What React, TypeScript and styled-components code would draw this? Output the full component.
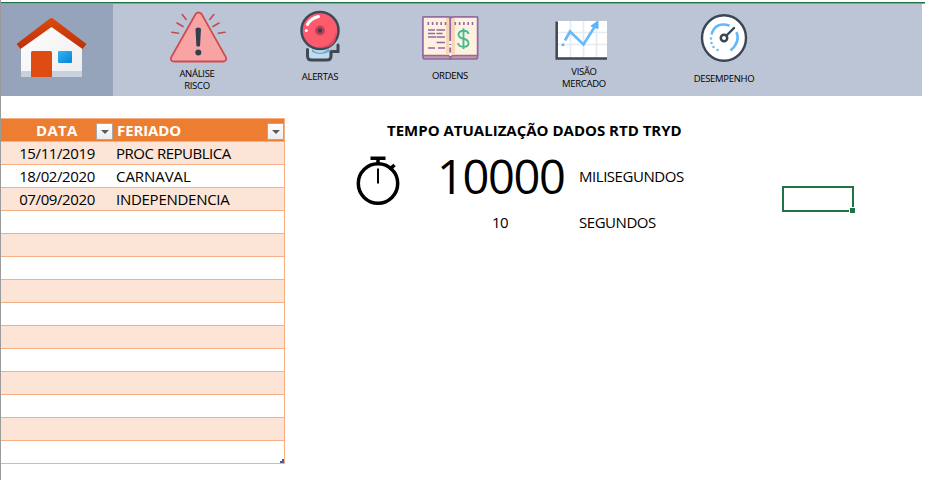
import React from "react";
import styled, { createGlobalStyle } from "styled-components";

const GlobalStyle = createGlobalStyle`
  *, *::before, *::after { box-sizing: border-box; }
  body { margin: 0; background: #fff; overflow: hidden; }
`;

const Sheet = styled.div`
  width: 925px;
  height: 480px;
  padding-top: 2px;
  border-left: 1px solid #9b9b9b;
  background: #fff;
  color: #000;
  font-family: "Open Sans", "Noto Sans", sans-serif;
  overflow: hidden;
`;

const TopRule = styled.div`
  height: 2px;
  background: #217346;
  border-bottom: 1px solid #82a591;
  margin-left: -1px;
`;

const Nav = styled.nav`
  display: flex;
  width: 921px;
  height: 92px;
  background: #bcc5d5;
`;

const HomeTab = styled.div`
  width: 112px;
  height: 92px;
  padding: 13px 0 0 14px;
  background: #95a4bb;
`;

const NavItem = styled.div<{ $width: number; $top: number }>`
  display: flex;
  flex-direction: column;
  align-items: center;
  width: ${(p) => p.$width}px;
  padding-top: ${(p) => p.$top}px;
  svg { flex: none; display: block; }
`;

const NavLabel = styled.span<{ $gap: number }>`
  margin-top: ${(p) => p.$gap}px;
  font-size: 9.5px;
  line-height: 12px;
  letter-spacing: -0.3px;
  text-align: center;
  white-space: pre;
`;

const Body = styled.main`
  display: flex;
  padding-top: 22px;
`;

const Table = styled.div`
  position: relative;
  width: 284px;
  border: 1px solid #f4b084;
  border-left: 0;
  border-bottom: 0;
`;

const HeaderRow = styled.div`
  display: grid;
  grid-template-columns: 112px 1fr;
  height: 23px;
  background: #ed7d31;
  border-bottom: 1px solid #f4b084;
  color: #fff;
  font-size: 15px;
  font-weight: 700;
  line-height: 23px;
`;

const HeaderCell = styled.div<{ $center?: boolean }>`
  display: flex;
  justify-content: space-between;
  padding-left: ${(p) => (p.$center ? 35 : 4)}px;
`;

const HeaderText = styled.span<{ $spacing: number }>`
  letter-spacing: ${(p) => p.$spacing}px;
`;

const FilterButton = styled.span`
  display: flex;
  align-items: center;
  justify-content: center;
  width: 17px;
  height: 17px;
  margin-top: 4px;
  border: 1px solid #a6a9ae;
  background: linear-gradient(#fff, #e9ecf1);
  &::after {
    content: "";
    border: 4px solid transparent;
    border-top-color: #5b5b5b;
    border-bottom: 0;
  }
`;

const Row = styled.div`
  display: grid;
  grid-template-columns: 112px 1fr;
  height: 23px;
  border-bottom: 1px solid #f4b084;
  font-size: 15px;
  line-height: 22px;
  &:nth-child(even) { background: #fce4d6; }
`;

const Cell = styled.span<{ $center?: boolean; $spacing: number }>`
  padding-left: ${(p) => (p.$center ? 0 : 3)}px;
  text-align: ${(p) => (p.$center ? "center" : "left")};
  letter-spacing: ${(p) => p.$spacing}px;
  white-space: nowrap;
`;

const ResizeCorner = styled.svg`
  position: absolute;
  right: 0;
  bottom: 1px;
`;

const Timer = styled.section`
  width: 334px;
  margin-left: 70px;
`;

const TimerTitle = styled.h1`
  margin: 1px 0 0 32px;
  font-size: 15px;
  font-weight: 700;
  line-height: 23px;
  letter-spacing: 0;
  white-space: nowrap;
`;

const TimerGrid = styled.div`
  display: grid;
  grid-template-columns: 46px 199px 1fr;
  grid-template-rows: 69px 23px;
`;

const ClockCell = styled.div`
  padding-top: 13px;
`;

const BigValue = styled.div`
  padding: 2px 0 0 36px;
  font-size: 47px;
  line-height: 64px;
  letter-spacing: -1.4px;
  white-space: nowrap;
`;

const SmallValue = styled.div`
  grid-column: 2;
  padding-left: 91px;
  font-size: 15px;
  line-height: 23px;
  letter-spacing: -0.5px;
`;

const Unit = styled.div<{ $top?: number }>`
  margin-left: -21px;
  padding-top: ${(p) => p.$top ?? 0}px;
  font-size: 15px;
  line-height: 23px;
  letter-spacing: -0.46px;
`;

const ActiveCell = styled.div`
  position: relative;
  width: 72px;
  height: 26px;
  margin: 68px 0 0 93px;
  border: 2px solid #217346;
  &::after {
    content: "";
    position: absolute;
    right: -3px;
    bottom: -3px;
    width: 6px;
    height: 6px;
    border: 1px solid #fff;
    border-width: 1px 0 0 1px;
    background: #217346;
  }
`;

const HomeIcon = () => (
  <svg width="74" height="64" viewBox="15 17 74 64">
    <defs>
      <linearGradient id="roof" x1="0" y1="0" x2="0" y2="1">
        <stop offset="0" stopColor="#dc480c" />
        <stop offset="1" stopColor="#bd310b" />
      </linearGradient>
      <linearGradient id="wall" x1="0" y1="0" x2="1" y2="1">
        <stop offset="0" stopColor="#fff" />
        <stop offset="1" stopColor="#ededee" />
      </linearGradient>
      <linearGradient id="pane" x1="0" y1="0" x2="1" y2="1">
        <stop offset="0" stopColor="#32b5ef" />
        <stop offset="1" stopColor="#0881da" />
      </linearGradient>
    </defs>
    <path d="M21 44 51.5 22 82 44V75q0 2-2 2H23q-2 0-2-2Z" fill="url(#wall)" />
    <path d="M21 71H82v4q0 2-2 2H23q-2 0-2-2Z" fill="#c8d2dd" />
    <path d="M50 18.6q1.500-1 3 0L86.500 44 82.500 49 51.500 27 20.500 49 16.500 44Z" fill="url(#roof)" />
    <path d="M31 77V52.500q0-1.500 1.500-1.500h18q1.500 0 1.500 1.500V77Z" fill="#df4b10" />
    <rect x="58" y="51" width="14" height="12" rx="1" fill="url(#pane)" />
  </svg>
);

const RiskIcon = () => (
  <svg width="60" height="54" viewBox="167 10 60 54" fill="none" strokeLinecap="round">
    <path d="M195.600 14q3-3 6 0L225.800 57q1.500 4.500-3 4.500H174.300q-4.500 0-3-4.500Z" fill="#f8a4a5" stroke="#cf4b50" strokeWidth="1.800" />
    <path d="m182.200 14.500 4 5M177 23l6 3.500M171.800 32.300l6.700.9M213.800 14.500l-4 5M219 23l-6 3.500M225 32.300l-6.700.9" stroke="#c8494f" strokeWidth="1.600" />
    <path d="M195.500 29q0-1.500 2.700-1.500T201 29l-1 17q-1.800 1.200-3.600 0Z" fill="#333f4d" />
    <circle cx="198.300" cy="52.500" r="3" fill="#333f4d" />
  </svg>
);

const AlertIcon = () => (
  <svg width="42" height="54" viewBox="299 9 42 54">
    <path d="M309 45h20v10q0 4-4 4h-12q-4 0-4-4Z" fill="#c4daed" />
    <path d="M312 49q8 8 17-1v4q-9 4-17 0Z" fill="#72a8d2" />
    <path d="M307.500 49.500V56q0 4 4 4H327q4 0 4-4V51.500M332.500 51.500h5.500V45" fill="none" stroke="#3e4955" strokeWidth="3" strokeLinecap="round" />
    <circle cx="320" cy="30.500" r="18.500" fill="#fd5b6d" stroke="#3e4955" strokeWidth="2.500" />
    <path d="M320 47q12-1 16-14 1.500 15-16 15Z" fill="#d94b5e" />
    <circle cx="320" cy="30.500" r="5" fill="#bd4055" />
    <circle cx="320" cy="30.500" r="2.300" fill="#423c4a" />
    <path d="M307.500 24.500q3-6 11-8" fill="none" stroke="#fff" strokeWidth="3" strokeLinecap="round" />
    <circle cx="306.300" cy="30.500" r="1.500" fill="#fff" />
  </svg>
);

const OrdersIcon = () => (
  <svg width="58" height="46" viewBox="421 15 58 46" fill="none">
    <rect x="423" y="17" width="54.500" height="42" rx="2" fill="#c798a2" stroke="#906aa2" strokeWidth="1.700" />
    <path d="M423 17h25.500l2 1.500 2-1.500h25v38.500h-25l-2 2-2-2H423Z" fill="#fff1df" stroke="#906aa2" strokeWidth="1.500" />
    <path d="M446 18h3v37h-3Z" fill="#f6d6b7" />
    <path d="M451.500 18h3.500v37h-3.500Z" fill="#f6d6b7" />
    <path d="M450.200 17v24M450.200 44v1M450.200 47.500v5M450.200 56v4" stroke="#906aa2" strokeWidth="1.900" />
    <path d="M427.500 23.500h21M454.500 23.500h21" stroke="#906aa2" strokeWidth="3" strokeDasharray="1.600 2.700" />
    <path d="M428 30h7M436.500 30h8.500M428 33.500h7M436.500 33.500h6M428 37h8M436.500 37h8.500M436.500 42.500h8.500M428 48h7M438 48h7" stroke="#906aa2" strokeWidth="1.500" />
    <path d="M468.500 34q-.5-3.300-5-3.300t-5 3.700q0 3.300 5 4.300t5 4.800q0 3.300-5 3.300t-5.500-3.800M463.500 28.300V49" stroke="#48b993" strokeWidth="1.900" />
  </svg>
);

const MarketIcon = () => (
  <svg width="58" height="42" viewBox="555 20 58 42" fill="none">
    <path d="M557 21h50v37h-50Z" fill="#fff" />
    <path d="M570.500 21v37M583.500 21v37M596.500 21v37M557 32.500h50M557 44.500h50" stroke="#e5ebf1" strokeWidth="1.700" />
    <path d="M556.700 21.500V58.500H607" stroke="#3e4753" strokeWidth="2.500" />
    <path d="m565 40.500 5-9 13.500 13L594.500 27" stroke="#66b9fa" strokeWidth="2.700" />
    <path d="m591 26 7-5v7.500Z" fill="#59b4fc" stroke="#59b4fc" strokeLinejoin="round" />
    <circle cx="563" cy="44.800" r="1.500" fill="#59b4fc" />
  </svg>
);

const GaugeIcon = () => (
  <svg width="48" height="50" viewBox="700 13 48 50" fill="none">
    <ellipse cx="724" cy="38" rx="22" ry="22.700" fill="#fff" stroke="#3b4653" strokeWidth="2.400" />
    <path d="M711.500 34.500C714 25.500 721 22.500 729.500 25.700M736.500 32Q740.500 42 730.500 50.500" stroke="#66b9fa" strokeWidth="2.600" />
    <path d="M711 38.500v.1M711.500 43v.1M713.500 47v.1M717.500 50v.1" stroke="#66b9fa" strokeWidth="2.500" strokeLinecap="round" />
    <circle cx="724" cy="38" r="3.200" stroke="#3b4653" strokeWidth="2.500" />
    <path d="m726.500 35.500 7.500-7.500" stroke="#3b4653" strokeWidth="2.400" strokeLinecap="round" />
  </svg>
);

const ClockIcon = () => (
  <svg width="46" height="50" viewBox="355 155 46 50" fill="none" stroke="#000">
    <circle cx="378" cy="183.500" r="19.700" strokeWidth="3.500" />
    <path d="M370.500 158.200h15M378 158.500v5" strokeWidth="3.500" />
    <path d="m389.500 169.500 5-4.500" strokeWidth="3.500" />
    <path d="M378 168.500V183.500" strokeWidth="2" />
  </svg>
);

const navItems = [
  { label: "ANÁLISE\nRISCO", width: 168, top: 6, gap: 4, icon: <RiskIcon /> },
  { label: "ALERTAS", width: 78, top: 5, gap: 8, icon: <AlertIcon /> },
  { label: "ORDENS", width: 182, top: 11, gap: 9, icon: <OrdersIcon /> },
  { label: "VISÃO\nMERCADO", width: 86, top: 16, gap: 4, icon: <MarketIcon /> },
  { label: "DESEMPENHO", width: 194, top: 9, gap: 10, icon: <GaugeIcon /> },
];

const holidays = [
  { date: "15/11/2019", name: "PROC REPUBLICA", spacing: -0.48 },
  { date: "18/02/2020", name: "CARNAVAL", spacing: -0.05 },
  { date: "07/09/2020", name: "INDEPENDENCIA", spacing: -0.27 },
];

const rows = Array.from({ length: 14 }, (_, i) => holidays[i]);

export default function App() {
  return (
    <Sheet>
      <GlobalStyle />
      <TopRule />
      <Nav>
        <HomeTab><HomeIcon /></HomeTab>
        {navItems.map((n) => (
          <NavItem key={n.label} $width={n.width} $top={n.top}>
            {n.icon}
            <NavLabel $gap={n.gap}>{n.label}</NavLabel>
          </NavItem>
        ))}
      </Nav>
      <Body>
        <Table>
          <HeaderRow>
            <HeaderCell $center>
              <HeaderText $spacing={0.3}>DATA</HeaderText>
              <FilterButton />
            </HeaderCell>
            <HeaderCell>
              <HeaderText $spacing={-0.1}>FERIADO</HeaderText>
              <FilterButton />
            </HeaderCell>
          </HeaderRow>
          {rows.map((row, i) => (
            <Row key={i}>
              <Cell $center $spacing={-0.4}>{row?.date}</Cell>
              <Cell $spacing={row?.spacing ?? 0}>{row?.name}</Cell>
            </Row>
          ))}
          <ResizeCorner width="4" height="4"><path d="M2 0h2v4H0V2h2Z" fill="#4a5aa8" /></ResizeCorner>
        </Table>
        <Timer>
          <TimerTitle>TEMPO ATUALIZAÇÃO DADOS RTD TRYD</TimerTitle>
          <TimerGrid>
            <ClockCell><ClockIcon /></ClockCell>
            <BigValue>10000</BigValue>
            <Unit $top={23}>MILISEGUNDOS</Unit>
            <SmallValue>10</SmallValue>
            <Unit>SEGUNDOS</Unit>
          </TimerGrid>
        </Timer>
        <ActiveCell />
      </Body>
    </Sheet>
  );
}
